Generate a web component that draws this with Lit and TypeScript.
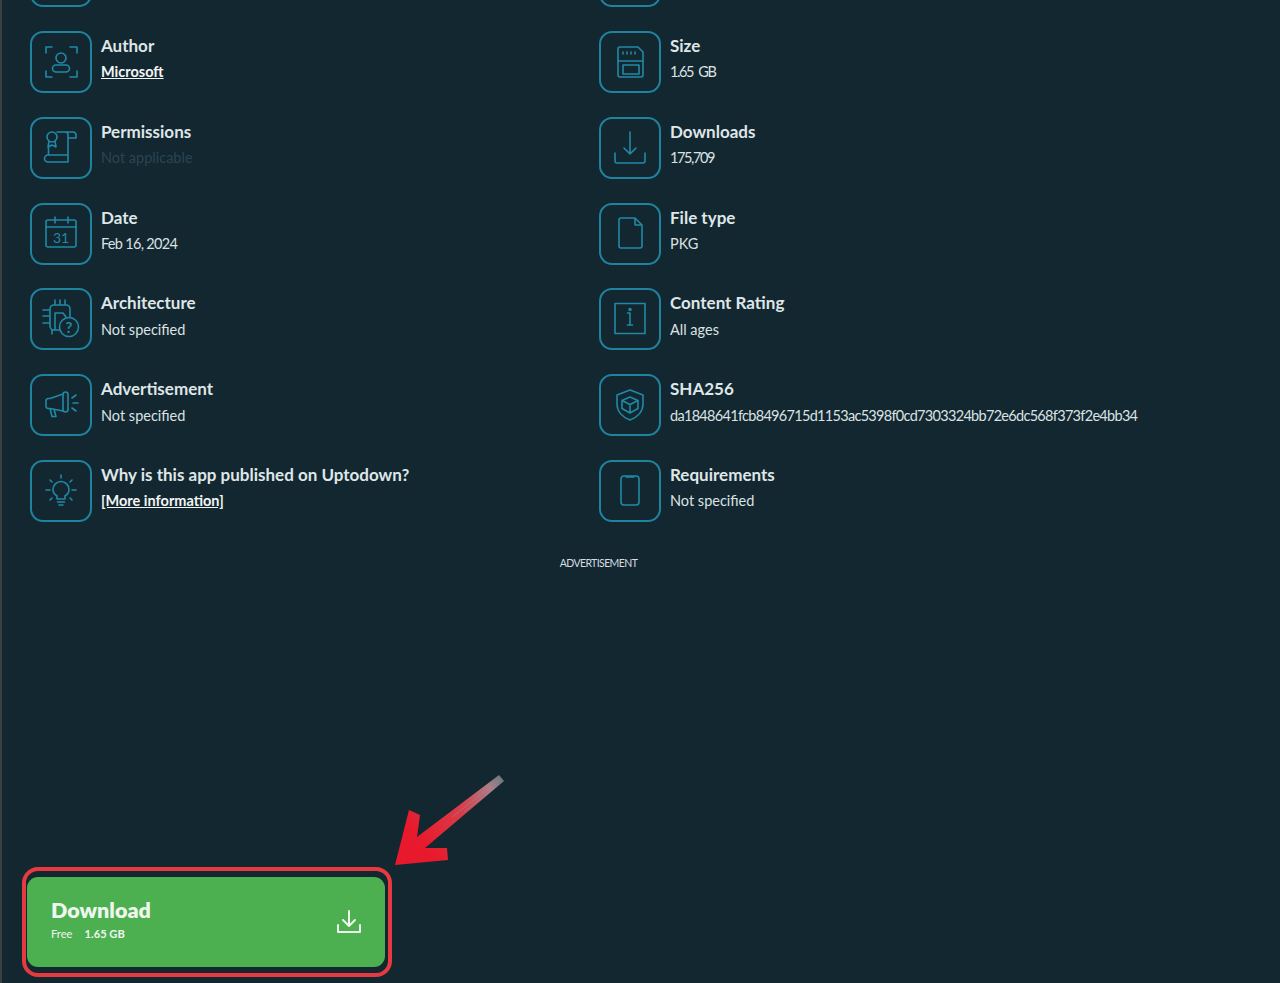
import { LitElement, html, css, svg } from "lit";
import { customElement } from "lit/decorators.js";

const icons: Record<string, unknown> = {
  author: svg`<path d="M16 22v-6h6M40 16h7v6M47 40v6h-7M22 46h-6v-6"/><circle cx="31" cy="27" r="5"/><rect x="22.500" y="34" width="17" height="7" rx="3.500"/>`,
  perm: svg`<circle cx="22" cy="20" r="5"/><path d="M19 24.500l-1 5.500 4-2 4 2-1-5.500M27 15h16a3 3 0 0 1 3 3v3h-8M35 15a3 3 0 0 1 3 3v20M18.500 30v8M18 38h20v7H18a3.500 3.500 0 0 1 0-7z"/>`,
  date: svg`<rect x="16" y="17" width="30" height="27" rx="2"/><path d="M16 24h30M25 14v6M38 14v6"/><text x="31" y="40" text-anchor="middle" class="gl">31</text>`,
  arch: svg`<path d="M30 42H24a4 4 0 0 1-4-4V21a4 4 0 0 1 4-4h12a4 4 0 0 1 4 4v8M25 42V25h8l3 4M25 12v5M30 12v5M35 12v5M13 22h7M13 28h7M13 35h7M22 42v4"/><circle cx="39" cy="39" r="9.500"/><text x="39" y="44.500" text-anchor="middle" class="gq">?</text>`,
  ad: svg`<rect x="33" y="18" width="5" height="20" rx="2.500"/><path d="M33 20l-13 4.500h-2a2.500 2.500 0 0 0-2 2.500v5a2.500 2.500 0 0 0 2 2.500h2l13 2.500M20 34.500l2 8h4l-2-7M42 24l4-3M43 29h5M42 34l4 3"/>`,
  bulb: svg`<path d="M27 39v-3c-3-2-4-4-4-6.500a8 8 0 0 1 16 0c0 2.500-1 4.500-4 6.500v3zM27.500 42h7M29 45h4M31 15v3M16 30h4M42 30h4M20 20l2 2M42 20l-2 2M20 40l2-2M42 40l-2-2"/>`,
  sd: svg`<path d="M21 16h18l5 5v23a2 2 0 0 1-2 2H21a2 2 0 0 1-2-2V18a2 2 0 0 1 2-2z"/><rect x="24" y="34" width="16" height="9"/><path d="M19 30h25M24 21v2M28 21v2M32 21v2M36 21v2"/>`,
  down: svg`<path d="M31 15v22M25 31l6 6 6-6M16 36v8a2 2 0 0 0 2 2h26a2 2 0 0 0 2-2v-8"/>`,
  file: svg`<path d="M22 15h14l7 7v21a2 2 0 0 1-2 2H22a2 2 0 0 1-2-2V17a2 2 0 0 1 2-2zM36 15v7h7"/>`,
  rate: svg`<rect x="16" y="15.500" width="30" height="30"/><path d="M31 25v12M28.500 37h5M28.500 25h2.500"/><circle cx="31" cy="21.500" r="1"/>`,
  sha: svg`<path d="M31 16l13 5v9c0 7-5 13-13 16-8-3-13-9-13-16v-9z"/><path d="M31 23l8 3.500v8L31 39l-8-4.500v-8zM23 26.500l8 4 8-4M31 30.500V39"/>`,
  phone: svg`<rect x="22" y="16" width="18" height="29" rx="3"/><path d="M27 17h8"/>`,
};

const rows = [
  [
    { i: "author", t: "Author", v: "Microsoft", k: "link" },
    { i: "sd", t: "Size", v: "1.65 GB", k: "num" },
  ],
  [
    { i: "perm", t: "Permissions", v: "Not applicable", k: "muted" },
    { i: "down", t: "Downloads", v: "175,709", k: "num" },
  ],
  [
    { i: "date", t: "Date", v: "Feb 16, 2024", k: "tight" },
    { i: "file", t: "File type", v: "PKG" },
  ],
  [
    { i: "arch", t: "Architecture", v: "Not specified" },
    { i: "rate", t: "Content Rating", v: "All ages" },
  ],
  [
    { i: "ad", t: "Advertisement", v: "Not specified" },
    { i: "sha", t: "SHA256", v: "da1848641fcb8496715d1153ac5398f0cd7303324bb72e6dc568f373f2e4bb34", k: "tight" },
  ],
  [
    { i: "bulb", t: "Why is this app published on Uptodown?", v: "[More information]", k: "link" },
    { i: "phone", t: "Requirements", v: "Not specified" },
  ],
];

@customElement("app-root")
export class AppRoot extends LitElement {
  static styles = css`
    :host {
      display: block;
      position: relative;
      width: 1280px;
      height: 983px;
      overflow: hidden;
      box-sizing: border-box;
      border-left: 2px solid #3a3f42;
      background: #132730;
      font-family: "Lato", "Liberation Sans", sans-serif;
      color: #e4eaec;
    }
    .page {
      display: flex;
      flex-direction: column;
      height: 983px;
    }
    .grid {
      display: grid;
      grid-template-columns: 569px 1fr;
      grid-auto-rows: 61.8px;
      row-gap: 24px;
      margin-top: -54.900px;
      padding-left: 28px;
    }
    .item {
      display: flex;
      gap: 9px;
      align-items: flex-start;
    }
    .tile {
      flex: none;
      width: 62px;
      height: 62px;
      box-sizing: border-box;
      border: 2px solid #1f839f;
      border-radius: 13px;
      position: relative;
    }
    .tile svg {
      position: absolute;
      left: -2px;
      top: -2px;
      width: 62px;
      height: 62px;
      fill: none;
      stroke: #2189a6;
      stroke-width: 1.600;
      stroke-linecap: round;
      stroke-linejoin: round;
    }
    .gl,
    .gq {
      font-size: 14px;
      fill: #2189a6;
      stroke: none;
    }
    .gq {
      font-size: 15px;
      font-weight: 700;
    }
    .text {
      display: flex;
      flex-direction: column;
      padding-top: 4px;
      gap: 5.500px;
    }
    .t {
      font-size: 17px;
      line-height: 22px;
      font-weight: 700;
      color: #dfe6e8;
      white-space: nowrap;
    }
    .v {
      font-size: 14.500px;
      line-height: 20px;
      color: #dbe2e4;
      white-space: nowrap;
    }
    .v.link {
      font-weight: 700;
      color: #f2f5f6;
      text-decoration: underline;
    }
    .v.muted {
      color: #294552;
    }
    .v.num {
      letter-spacing: -1.400px;
      word-spacing: 3px;
    }
    .v.tight {
      letter-spacing: -0.700px;
    }
    .ad {
      align-self: center;
      margin: 33px 85px 0 0;
      font-size: 10.500px;
      line-height: 16px;
      letter-spacing: -0.600px;
      color: #d5dde0;
    }
    .hl {
      margin: auto 0 6px 20px;
      width: 370px;
      height: 110px;
      box-sizing: border-box;
      border: 4px solid #e63a40;
      border-radius: 16px;
      padding: 6px 3px 6px 1px;
    }
    .btn {
      height: 100%;
      box-sizing: border-box;
      background: #4caf50;
      border-radius: 11px;
      padding: 0 23px 0 24px;
      display: flex;
      justify-content: space-between;
      align-items: center;
      color: #eef6ee;
    }
    .btn-text {
      display: flex;
      flex-direction: column;
      gap: 3px;
      margin-bottom: 7px;
    }
    .btn-title {
      font-size: 21.500px;
      line-height: 28px;
      font-weight: 800;
    }
    .btn-sub {
      font-size: 11.200px;
      line-height: 14px;
      display: flex;
      gap: 12px;
    }
    .btn-sub b {
      font-weight: 700;
    }
    .btn svg {
      width: 26px;
      height: 26px;
      fill: none;
      stroke: #eef6ee;
      stroke-width: 2;
      stroke-linecap: round;
      stroke-linejoin: round;
    }
    .arrow {
      position: absolute;
      left: 0;
      top: 0;
      width: 1280px;
      height: 983px;
      pointer-events: none;
    }
  `;

  render() {
    return html`
      <div class="page">
        <div class="grid">
          <div class="item"><div class="tile"></div></div>
          <div class="item"><div class="tile"></div></div>
          ${rows.flat().map(
            (c: { i: string; t: string; v: string; k?: string }) => html`
              <div class="item">
                <div class="tile"><svg viewBox="0 0 62 62">${icons[c.i]}</svg></div>
                <div class="text">
                  <div class="t">${c.t}</div>
                  <div class="v ${c.k ?? ""}">${c.v}</div>
                </div>
              </div>
            `
          )}
        </div>
        <div class="ad">ADVERTISEMENT</div>
        <div class="hl">
          <div class="btn">
            <div class="btn-text">
              <div class="btn-title">Download</div>
              <div class="btn-sub"><span>Free</span><b>1.65 GB</b></div>
            </div>
            <svg viewBox="0 0 26 26"><path d="M13 2v15M7 11l6 6 6-6M2 16v7h22v-7"/></svg>
          </div>
        </div>
      </div>
      <svg class="arrow" viewBox="0 0 1280 983">
        <defs>
          <linearGradient id="g" x1="420" y1="845" x2="500" y2="778" gradientUnits="userSpaceOnUse">
            <stop offset="0" stop-color="#e8192c" />
            <stop offset="0.55" stop-color="#d8404c" />
            <stop offset="0.85" stop-color="#b07c86" />
            <stop offset="1" stop-color="#6a7a82" />
          </linearGradient>
        </defs>
        <path
          fill="url(#g)"
          d="M393 865L407 810L418 815L415 837L497 775L502 781L423 848L445 848L446 860Z"
        />
        <path
          d="M450 817L498 780M462 812L490 790"
          fill="none"
          stroke="#8f8a92"
          stroke-width="1"
          opacity="0.6"
        />
      </svg>
    `;
  }
}
